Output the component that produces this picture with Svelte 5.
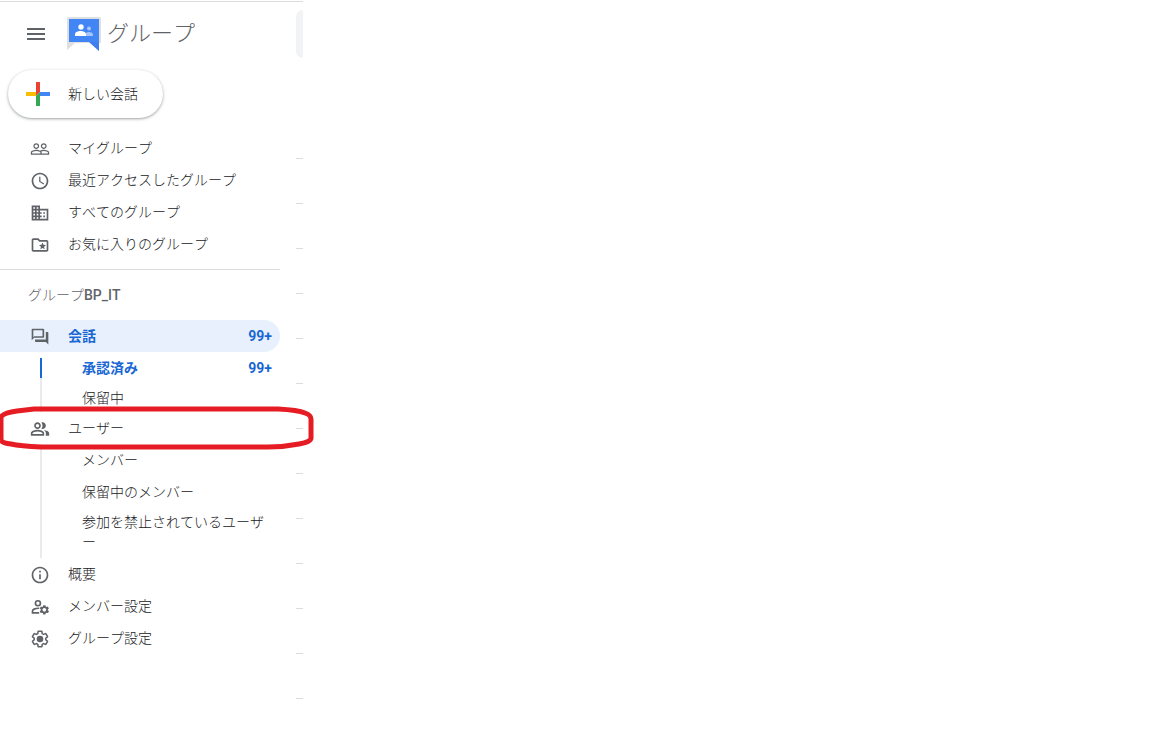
<script lang="ts">
interface NavItem {
  label: string
  icon: string
}

const shortcuts: NavItem[] = [
  { label: 'マイグループ', icon: 'people' },
  { label: '最近アクセスしたグループ', icon: 'clock' },
  { label: 'すべてのグループ', icon: 'domain' },
  { label: 'お気に入りのグループ', icon: 'folder' }
]

const userPages = ['メンバー', '保留中のメンバー', '参加を禁止されているユーザー']

const settings: NavItem[] = [
  { label: '概要', icon: 'info' },
  { label: 'メンバー設定', icon: 'manage' },
  { label: 'グループ設定', icon: 'gear' }
]

const threadRows = Array.from({ length: 13 }, (_, i) => i)

const gearPath =
  'M19.43 12.98c.04-.32.07-.64.07-.98 0-.34-.03-.66-.07-.98l2.11-1.65c.19-.15.24-.42.12-.64l-2-3.46c-.09-.16-.26-.25-.44-.25-.06 0-.12.01-.17.03l-2.49 1c-.52-.4-1.08-.73-1.69-.98l-.38-2.65C14.46 2.18 14.25 2 14 2h-4c-.25 0-.46.18-.49.42l-.38 2.65c-.61.25-1.17.59-1.69.98l-2.49-1c-.06-.02-.12-.03-.18-.03-.17 0-.34.09-.43.25l-2 3.46c-.13.22-.07.49.12.64l2.11 1.65c-.04.32-.07.65-.07.98 0 .33.03.66.07.98l-2.11 1.65c-.19.15-.24.42-.12.64l2 3.46c.09.16.26.25.44.25.06 0 .12-.01.17-.03l2.49-1c.52.4 1.08.73 1.69.98l.38 2.65c.03.24.24.42.49.42h4c.25 0 .46-.18.49-.42l.38-2.65c.61-.25 1.17-.59 1.69-.98l2.49 1c.06.02.12.03.18.03.17 0 .34-.09.43-.25l2-3.46c.12-.22.07-.49-.12-.64l-2.11-1.65z'
</script>

{#snippet icon(name: string)}
  <svg class="icon" viewBox="0 0 24 24" aria-hidden="true">
    {#if name === 'people'}
      <path d="M16.5 13c-1.2 0-3.07.34-4.5 1-1.43-.67-3.3-1-4.5-1C5.33 13 1 14.08 1 16.25V19h22v-2.75c0-2.17-4.33-3.25-6.5-3.25zm-4 4.5h-10v-1.25c0-.54 2.56-1.75 5-1.75s5 1.21 5 1.75v1.25zm9 0H14v-1.25c0-.46-.2-.86-.52-1.22.88-.3 1.96-.53 3.02-.53 2.44 0 5 1.21 5 1.75v1.25zM7.5 12c1.93 0 3.5-1.57 3.5-3.5S9.43 5 7.5 5 4 6.57 4 8.5 5.57 12 7.5 12zm0-5.5c1.1 0 2 .9 2 2s-.9 2-2 2-2-.9-2-2 .9-2 2-2zm9 5.5c1.93 0 3.5-1.57 3.5-3.5S18.43 5 16.5 5 13 6.57 13 8.5s1.57 3.5 3.5 3.5zm0-5.5c1.1 0 2 .9 2 2s-.9 2-2 2-2-.9-2-2 .9-2 2-2z" />
    {:else if name === 'clock'}
      <path d="M11.99 2C6.47 2 2 6.48 2 12s4.47 10 9.99 10C17.52 22 22 17.52 22 12S17.52 2 11.99 2zM12 20c-4.42 0-8-3.58-8-8s3.58-8 8-8 8 3.58 8 8-3.58 8-8 8zm.5-13H11v6l5.25 3.15.75-1.23-4.5-2.67z" />
    {:else if name === 'domain'}
      <path d="M12 7V3H2v18h20V7H12zM6 19H4v-2h2v2zm0-4H4v-2h2v2zm0-4H4V9h2v2zm0-4H4V5h2v2zm4 12H8v-2h2v2zm0-4H8v-2h2v2zm0-4H8V9h2v2zm0-4H8V5h2v2zm10 12h-8v-2h2v-2h-2v-2h2v-2h-2V9h8v10zm-2-8h-2v2h2v-2zm0 4h-2v2h2v-2z" />
    {:else if name === 'folder'}
      <path d="M20 6h-8l-2-2H4c-1.1 0-2 .9-2 2v12c0 1.1.9 2 2 2h16c1.1 0 2-.9 2-2V8c0-1.1-.9-2-2-2zm0 12H4V6h5.17l2 2H20v10z" />
      <path d="M15 9l1.2 2.8 3 .3-2.3 2 .7 2.9-2.6-1.5-2.6 1.5.7-2.9-2.3-2 3-.3z" />
    {:else if name === 'forum'}
      <path d="M15 4v7H5.17L4 12.17V4h11m1-2H3c-.55 0-1 .45-1 1v13l3-3h11c.55 0 1-.45 1-1V3c0-.55-.45-1-1-1zm5 4h-2v9H6v2c0 .55.45 1 1 1h12l3 3V7c0-.55-.45-1-1-1z" />
    {:else if name === 'users'}
      <path d="M16.67 13.13C18.04 14.06 19 15.32 19 17v3h4v-3c0-2.18-3.57-3.47-6.33-3.87zM15 12c2.21 0 4-1.79 4-4s-1.79-4-4-4c-.47 0-.91.1-1.33.24C14.5 5.27 15 6.58 15 8s-.5 2.73-1.33 3.76c.42.14.86.24 1.33.24zM9 12c2.21 0 4-1.79 4-4s-1.79-4-4-4-4 1.79-4 4 1.79 4 4 4zm0-6c1.1 0 2 .9 2 2s-.9 2-2 2-2-.9-2-2 .9-2 2-2zm0 7c-2.67 0-8 1.34-8 4v3h16v-3c0-2.66-5.33-4-8-4zm6 5H3v-.99C3.2 16.29 6.3 15 9 15s5.8 1.29 6 2v1z" />
    {:else if name === 'info'}
      <path d="M11 7h2v2h-2zm0 4h2v6h-2zm1-9C6.48 2 2 6.48 2 12s4.48 10 10 10 10-4.48 10-10S17.52 2 12 2zm0 18c-4.41 0-8-3.59-8-8s3.59-8 8-8 8 3.59 8 8-3.59 8-8 8z" />
    {:else if name === 'manage'}
      <g class="line">
        <circle cx="9.500" cy="7.500" r="3" />
        <path d="M11 13.500c-3.800-.3-8 1.200-8 3.200V19h8" />
      </g>
      <path d={gearPath} transform="translate(10.500 8.700) scale(.56)" />
      <circle cx="17.200" cy="15.400" r="2.200" fill="#fff" />
    {:else if name === 'gear'}
      <path class="line" d={gearPath} transform="translate(.84 .84) scale(.93)" />
      <circle cx="12" cy="12" r="4" />
    {/if}
  </svg>
{/snippet}

<div class="app">
  <aside class="sidebar">
    <header class="header">
      <button class="menu-button" aria-label="メインメニュー">
        <svg viewBox="0 0 24 24" aria-hidden="true">
          <path d="M3 18h18v-2H3v2zm0-5h18v-2H3v2zm0-7v2h18V6H3z" />
        </svg>
      </button>
      <a class="brand" href="#home">
        <svg class="logo" viewBox="0 0 36 36" aria-hidden="true">
          <path fill="#dedfe0" d="M3 1h30a2 2 0 0 1 2 2v24H9l-8 7V3a2 2 0 0 1 2-2z" />
          <path fill="#4285f4" d="M3 3h30v32l-10-9H3z" />
          <path fill="#3b78e7" opacity=".5" d="M23 26h10v9z" />
          <g fill="#a6c4f9">
            <circle cx="23" cy="12.500" r="2" />
            <path d="M19 20v-1.500c0-1.500 2-2.500 4-2.500s4 1 4 2.500V20z" />
          </g>
          <g fill="#fff">
            <circle cx="15" cy="11" r="2.700" />
            <path d="M9 20v-1.800c0-2 3-3.200 5.500-3.200s5.500 1.200 5.500 3.200V20z" />
          </g>
        </svg>
        <span>グループ</span>
      </a>
    </header>

    <button class="compose">
      <svg viewBox="0 0 24 24" aria-hidden="true">
        <path fill="#fbbc04" d="M0 10h10v4H0z" />
        <path fill="#4285f4" d="M14 10h10v4H12z" />
        <path fill="#ea4335" d="M10 0h4v10l-4 4z" />
        <path fill="#34a853" d="M10 14l4-4v14h-4z" />
      </svg>
      新しい会話
    </button>

    <nav>
      <ul class="shortcuts">
        {#each shortcuts as item}
          <li><a class="row" href="#{item.icon}">{@render icon(item.icon)}<span>{item.label}</span></a></li>
        {/each}
      </ul>

      <h2>グループ<span>BP_IT</span></h2>

      <ul>
        <li>
          <a class="row active" href="#conversations">
            {@render icon('forum')}
            <span>会話</span>
            <span class="count">99+</span>
          </a>
          <ul class="sub conversations">
            <li class="current">
              <a href="#approved"><span>承認済み</span><span class="count">99+</span></a>
            </li>
            <li><a href="#pending">保留中</a></li>
          </ul>
        </li>
        <li>
          <div class="marked">
            <a class="row" href="#users">{@render icon('users')}<span>ユーザー</span></a>
            <svg class="marker" viewBox="0 0 316 46" aria-hidden="true">
              <path d="M1 34V11Q3 7 17 5L34 3H278Q298 4 305 7Q311 9 311 13V32Q311 36 299 38Q284 41 268 41H41Q20 40 11 38Q2 37 1 34" />
            </svg>
          </div>
          <ul class="sub">
            {#each userPages as page}
              <li><a href="#members">{page}</a></li>
            {/each}
          </ul>
        </li>
        {#each settings as item}
          <li><a class="row" href="#{item.icon}">{@render icon(item.icon)}<span>{item.label}</span></a></li>
        {/each}
      </ul>
    </nav>
  </aside>

  <main class="content">
    <div class="search"></div>
    {#each threadRows as row (row)}
      <div class="thread"></div>
    {/each}
  </main>
</div>

<style>
  :global(body) {
    margin: 0;
    background: #fff;
  }

  .app {
    display: flex;
    gap: 16px;
    box-sizing: border-box;
    width: 303px;
    margin-top: 1px;
    border-top: 1px solid #dadce0;
    color: #202124;
    font: 300 14px/20px Roboto, "Noto Sans CJK JP", sans-serif;
    font-kerning: none;
  }

  .sidebar {
    width: 280px;
    flex-shrink: 0;
  }

  ul {
    list-style: none;
    margin: 0;
    padding: 0;
  }

  a {
    color: inherit;
    text-decoration: none;
  }

  button {
    border: 0;
    background: none;
    color: inherit;
    font: inherit;
    cursor: pointer;
  }

  .header {
    display: flex;
    align-items: center;
    height: 64px;
    padding-left: 24px;
  }

  .menu-button {
    display: flex;
    padding: 0;

    svg {
      width: 24px;
      height: 24px;
      fill: #5f6368;
    }
  }

  .brand {
    display: flex;
    align-items: center;
    gap: 5px;
    margin-left: 18px;
    color: #5f6368;
    font-size: 22px;
    line-height: 32px;
  }

  .logo {
    width: 36px;
    height: 36px;
  }

  .compose {
    display: flex;
    align-items: center;
    gap: 18px;
    height: 48px;
    margin: 4px 0 14px 8px;
    padding: 0 25px 0 18px;
    border-radius: 24px;
    background: #fff;
    box-shadow: 0 1px 2px rgba(60, 64, 67, 0.3), 0 1px 3px 1px rgba(60, 64, 67, 0.15);

    svg {
      width: 24px;
      height: 24px;
    }
  }

  .shortcuts {
    padding-bottom: 9px;
    border-bottom: 1px solid #dadce0;
  }

  .row {
    display: flex;
    align-items: center;
    gap: 18px;
    height: 32px;
    padding: 0 8px 0 30px;
  }

  .icon {
    width: 20px;
    height: 20px;
    padding-top: 2px;
    flex-shrink: 0;
    fill: #5f6368;

    .line {
      fill: none;
      stroke: #5f6368;
      stroke-width: 2;
    }
  }

  h2 {
    margin: 0;
    padding: 15px 28px;
    color: #5f6368;
    font-size: 14px;
    font-weight: 300;
    line-height: 20px;

    span {
      font-weight: 500;
    }
  }

  .active {
    border-radius: 0 16px 16px 0;
    background: #e8f0fe;
    color: #1967d2;
    font-weight: 700;
  }

  .count {
    margin-left: auto;
  }

  .sub {
    margin-left: 40px;

    li {
      border-left: 2px solid #e8eaed;
    }

    a {
      display: flex;
      padding: 6px 8px 6px 40px;
    }

    li:last-child a {
      padding-top: 4px;
    }
  }

  .conversations {
    padding-top: 6px;

    li:last-child a {
      padding: 10px 8px 4px 40px;
    }

    .current {
      border-color: #1967d2;
      color: #1967d2;
      font-weight: 700;

      a {
        padding-top: 0;
        padding-bottom: 0;
      }
    }
  }

  .marked {
    position: relative;
  }

  .marker {
    position: absolute;
    top: -6px;
    left: 0;
    width: 316px;
    height: 46px;
    fill: none;
    stroke: #e51c23;
    stroke-width: 5;
    pointer-events: none;
  }

  .content {
    flex: 1;
    padding-top: 8px;
  }

  .search {
    height: 48px;
    margin-bottom: 56px;
    border-radius: 8px 0 0 8px;
    background: #f1f3f4;
  }

  .thread {
    height: 44px;
    border-bottom: 1px solid #dadce0;
  }
</style>
